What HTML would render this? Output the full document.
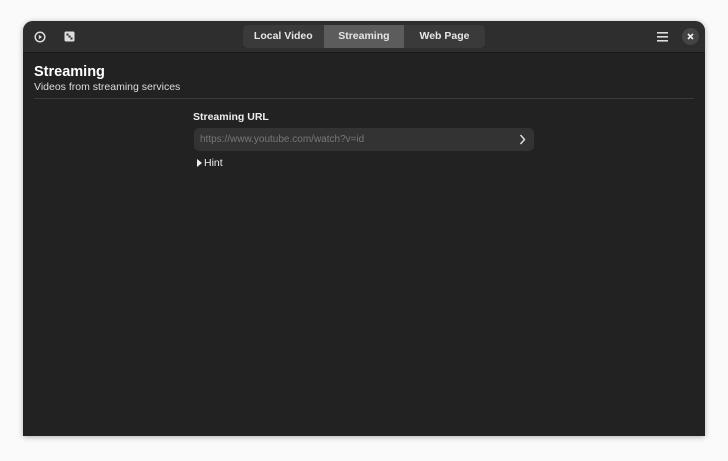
<!DOCTYPE html>
<html><head><style>
*{margin:0;padding:0;box-sizing:border-box}
body{width:728px;height:461px;background:#fafafa;font-family:"Liberation Sans","DejaVu Sans",sans-serif;position:relative;overflow:hidden}
.win{position:absolute;left:23px;top:21px;width:682px;height:415px;background:#222;border-radius:10px 10px 0 0;overflow:hidden;box-shadow:0 1px 6px rgba(0,0,0,.3)}
.hb{position:absolute;left:0;top:0;width:682px;height:32px;background:#2e2e2e;border-bottom:1px solid #1a1a1a}
.tabs{position:absolute;left:220px;top:4px;width:242px;height:23px;background:#3a3a3a;border-radius:5px;display:flex;overflow:hidden}
.tabs div{width:80.6px;color:#e6e6e6;font-size:10.5px;font-weight:bold;text-align:center;line-height:23px}
.tabs .a{background:#5c5c5c}
.t{position:absolute;color:#fff}
</style></head><body>
<div class="win">
<div class="hb">
<svg style="position:absolute;left:11px;top:10px" width="12" height="12" viewBox="0 0 12 12"><circle cx="6" cy="6" r="4.8" fill="none" stroke="#ddd" stroke-width="1.5"/><path d="M4.8 3.8L8 6L4.8 8.2Z" fill="#ddd"/></svg>
<svg style="position:absolute;left:41px;top:10px" width="11" height="11" viewBox="0 0 11 11"><rect x="0.5" y="0.5" width="10" height="10" rx="1.5" fill="#ddd"/><rect x="2.5" y="2.5" width="2" height="2" fill="#2e2e2e"/><rect x="6.5" y="6.5" width="2" height="2" fill="#2e2e2e"/><rect x="4.5" y="4.5" width="2" height="2" fill="#2e2e2e"/></svg>
<div class="tabs"><div>Local Video</div><div class="a">Streaming</div><div>Web Page</div></div>
<svg style="position:absolute;left:634px;top:11px" width="11" height="10"><rect y="0" width="11" height="1.6" fill="#ddd"/><rect y="4" width="11" height="1.6" fill="#ddd"/><rect y="8" width="11" height="1.6" fill="#ddd"/></svg>
<div style="position:absolute;left:659px;top:7px;width:17px;height:17px;border-radius:50%;background:#444"></div>
<svg style="position:absolute;left:664px;top:12px" width="7" height="7"><path d="M1 1L6 6M6 1L1 6" stroke="#eee" stroke-width="1.6"/></svg>
</div>
<div class="t" style="left:11px;top:43px;font-size:14.5px;font-weight:bold">Streaming</div>
<div class="t" style="left:11px;top:60px;font-size:10.5px;color:#ddd">Videos from streaming services</div>
<div style="position:absolute;left:11px;top:77px;width:660px;height:1px;background:#3a3a3a"></div>
<div class="t" style="left:170px;top:90px;font-size:10.5px;font-weight:bold;color:#eee">Streaming URL</div>
<div style="position:absolute;left:171px;top:107px;width:340px;height:23px;background:#333;border-radius:5px"></div>
<div class="t" style="left:177px;top:113px;font-size:10px;color:#777">https://www.youtube.com/watch?v=id</div>
<svg style="position:absolute;left:496px;top:113px" width="7" height="11"><path d="M1.5 1L5.5 5.5L1.5 10" fill="none" stroke="#ddd" stroke-width="1.5"/></svg>
<svg style="position:absolute;left:174px;top:138px" width="5" height="8"><path d="M0 0L5 4L0 8Z" fill="#eee"/></svg>
<div class="t" style="left:181px;top:136px;font-size:10.5px;color:#eee">Hint</div>
</div>
</body></html>
